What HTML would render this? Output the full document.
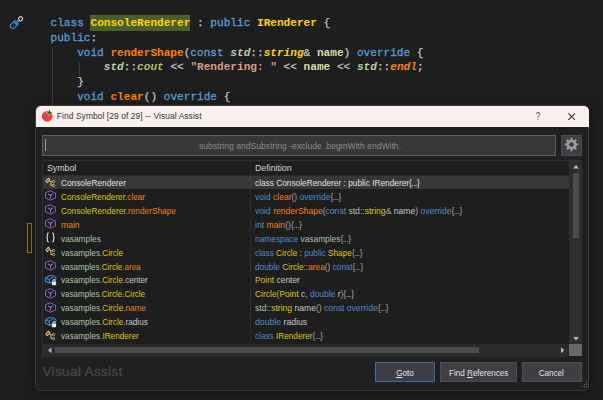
<!DOCTYPE html>
<html><head><meta charset="utf-8"><title>Find Symbol</title>
<style>
html,body{margin:0;padding:0;}
body{width:603px;height:400px;overflow:hidden;background:#1e1e1e;position:relative;font-family:"Liberation Sans",sans-serif;}
.abs{position:absolute;}
/* code */
.code{position:absolute;left:50.5px;top:16.2px;margin:0;font-family:"Liberation Mono",monospace;font-size:11.1px;line-height:14.75px;color:#c8c8c8;white-space:pre;letter-spacing:0;}
.code .k{color:#569cd6;-webkit-text-stroke:0.3px #569cd6;}
.code .t{color:#ffd700;font-weight:bold;}
.code .f{color:#ff8000;font-weight:bold;}
.code .n{color:#b5cea8;font-style:italic;font-weight:bold;}
.code .v{color:#bdb76b;font-style:italic;font-weight:bold;}
.code .s{color:#d69d85;font-weight:bold;}
.code .p{color:#dcdcaa;font-weight:bold;}
.code .o{color:#c4c4c4;-webkit-text-stroke:0.25px #c4c4c4;}
.code .hl{background:#4b5e28;padding:2.2px 0 1.6px 0.8px;margin:0 0 0 -0.8px;}
.guide{position:absolute;width:1px;background:#3a3a3a;}
/* dialog */
#dlg{position:absolute;left:35.5px;top:105.5px;width:553px;height:284.5px;background:#202020;border-radius:5px;box-shadow:0 2px 14px rgba(0,0,0,.4);}
#dlg:after{content:"";position:absolute;left:-0.7px;top:-0.3px;right:-0.7px;bottom:-1.3px;border-radius:5.5px;border:1px solid rgba(255,255,255,0.15);box-sizing:border-box;pointer-events:none;}
#title{position:absolute;left:0;top:0;right:0;height:21.5px;background:#f9f0ee;border-radius:5px 5px 0 0;}
#title .txt{position:absolute;left:21.3px;top:5.3px;font-size:8.4px;line-height:11px;color:#333;letter-spacing:0.1px;white-space:pre;}
#search{position:absolute;left:6.5px;top:29px;width:514px;height:21px;background:#383838;border:1px solid #5c5c5c;box-sizing:border-box;}
#search .ph{position:absolute;left:2px;right:0;top:5px;text-align:center;font-size:8.6px;line-height:11px;color:#8c8c8c;letter-spacing:0px;white-space:pre;}
#search .cur{position:absolute;left:1.9px;top:3px;width:1px;height:12px;background:#9a9a9a;}
#gear{position:absolute;left:525px;top:29px;width:21.5px;height:21px;background:#3f3f45;border:1px solid #4b4b52;box-sizing:border-box;}
#list{position:absolute;left:6.5px;top:54.5px;width:540px;height:196.5px;background:#1e1e1e;border:1px solid #303030;border-right:0;border-bottom:0;box-sizing:border-box;overflow:hidden;}
.hdr{position:absolute;top:-0.2px;height:14px;font-size:9.8px;line-height:13px;color:#d4d4d4;transform:scaleX(.897);transform-origin:0 50%;white-space:pre;}
.row{position:absolute;left:0;width:527px;height:14px;font-size:9.8px;line-height:14px;white-space:pre;color:#c8c8c8;}
.row .sym{position:absolute;left:18px;top:0.55px;transform:scaleX(.89);transform-origin:0 50%;}
.row .def{position:absolute;left:212.5px;top:0.55px;transform:scaleX(.89);transform-origin:0 50%;}
.row .ic{position:absolute;left:1px;top:0;width:14px;height:14px;}
.selbg{position:absolute;left:0;top:14px;width:527px;height:14px;background:linear-gradient(#2b2b2b 0 1px,#373737 1px 14px);}
.ns{color:#a8c4a6;} .ty{color:#dfc21c;} .fn{color:#ee7f1e;} .kw{color:#4f8ccc;} .gr{color:#a8a8a8;} .wh{color:#e0e0e0;} .lg{color:#c8c8c8;}
.btn{position:absolute;top:256.2px;height:20.8px;background:#3e3e44;border:1px solid #4c4c52;box-sizing:border-box;color:#e4e4e4;font-size:9.2px;line-height:20.4px;text-align:center;}
.btn span{display:inline-block;transform:scaleX(.88);white-space:pre;}
u{text-decoration-thickness:0.7px;text-underline-offset:1px;}
</style></head>
<body>
<!-- gutter -->
<svg class="abs" style="left:5px;top:10px" width="25" height="25" viewBox="0 0 25 25"><g fill="none" transform="translate(7.85 15.9) rotate(-42.7)"><path d="M5.3 -0.75 H8.6 M5.3 0.75 H8.6" stroke="#bdbdbd" stroke-width="0.8"/><circle cx="10.55" cy="0" r="2" stroke="#c8c8c8" stroke-width="1.15"/><path d="M5.2 -2.45 H0 A2.45 2.45 0 0 0 0 2.45 H5.2z M3.5 -2.45 V2.45" stroke="#3a8fd8" stroke-width="1.15" stroke-linejoin="round"/><path d="M4.35 -2.45 V2.45" stroke="#3a8fd8" stroke-width="0.9" opacity="0.55"/></g></svg>
<div class="abs" style="left:27px;top:223px;width:5px;height:30px;box-sizing:border-box;border:1px solid #8a7a22;"></div>
<div class="guide" style="left:52px;top:47px;height:60px"></div>
<div class="guide" style="left:79px;top:62px;height:14px"></div>
<pre class="code"><span class="k">class</span> <span class="t hl">ConsoleRenderer</span> <span class="o">:</span> <span class="k">public</span> <span class="t">IRenderer</span> <span class="o">{</span>
<span class="k">public</span><span class="o">:</span>
    <span class="k">void</span> <span class="f">renderShape</span><span class="o">(</span><span class="k">const</span> <span class="n">std</span><span class="o">::</span><span class="t" style="font-style:italic">string</span><span class="o">&amp;</span> <span class="p">name</span><span class="o">)</span> <span class="k">override</span> <span class="o">{</span>
        <span class="n">std</span><span class="o">::</span><span class="v">cout</span> <span class="o">&lt;&lt;</span> <span class="s">"Rendering: "</span> <span class="o">&lt;&lt;</span> <span class="p">name</span> <span class="o">&lt;&lt;</span> <span class="n">std</span><span class="o">::</span><span class="f" style="font-style:italic">endl</span><span class="o">;</span>
    <span class="o">}</span>
    <span class="k">void</span> <span class="f">clear</span><span class="o">()</span> <span class="k">override</span> <span class="o">{</span></pre>

<div id="dlg">
  <div id="title">
    <svg class="abs" style="left:0.5px;top:-0.5px" width="25" height="25" viewBox="0 0 25 25"><circle cx="11.2" cy="11.3" r="5.4" fill="#e0443a"/><path d="M13.4 4.6 L14.3 6.7 L16.4 7.6 L14.3 8.5 L13.4 10.6 L12.5 8.5 L10.4 7.6 L12.5 6.7z" fill="#0f7a1c" stroke="#f9f0ee" stroke-width="0.9" paint-order="stroke" stroke-linejoin="round"/></svg>
    <div class="txt">Find Symbol [29 of 29] -- Visual Assist</div>
    <div class="abs" style="left:499.4px;top:5.5px;font-size:10.8px;line-height:11px;color:#505050;transform:scaleX(.72);">?</div>
    <svg class="abs" style="left:532.3px;top:7px" width="7.4" height="7.4" viewBox="0 0 7.4 7.4"><path d="M0.2 0.2 L7.2 7.2 M7.2 0.2 L0.2 7.2" stroke="#3a3a3a" stroke-width="1.1" fill="none"/></svg>
  </div>
  <div id="search"><div class="cur"></div><div class="ph">substring andSubstring -exclude .beginWith endWith.</div></div>
  <div id="gear"><svg class="abs" style="left:2.2px;top:1.7px" width="15" height="15" viewBox="0 0 16 16"><g fill="#9c9c9c"><circle cx="8" cy="8" r="5.2"/><g transform="rotate(0 8 8)"><path d="M6.7 3.6 L7 0.8 H9 L9.3 3.6z M6.7 12.4 L7 15.2 H9 L9.3 12.4z"/></g><g transform="rotate(45 8 8)"><path d="M6.7 3.6 L7 0.8 H9 L9.3 3.6z M6.7 12.4 L7 15.2 H9 L9.3 12.4z"/></g><g transform="rotate(90 8 8)"><path d="M6.7 3.6 L7 0.8 H9 L9.3 3.6z M6.7 12.4 L7 15.2 H9 L9.3 12.4z"/></g><g transform="rotate(135 8 8)"><path d="M6.7 3.6 L7 0.8 H9 L9.3 3.6z M6.7 12.4 L7 15.2 H9 L9.3 12.4z"/></g></g><circle cx="8" cy="8" r="2.5" fill="#3f3f45"/></svg></div>
  <div id="list">
    <div class="hdr" style="left:4px">Symbol</div>
    <div class="hdr" style="left:212px">Definition</div>
    <div class="selbg"></div>
    <div class="abs" style="left:207px;top:0;width:1px;height:182.5px;background:rgba(255,255,255,0.07)"></div>
    <div class="row" style="top:14.5px"><svg class="ic" viewBox="0 0 14 14"><g fill="none" stroke="#d9ba7e" stroke-width="1"><path d="M4.5 2.2 L5.8 3.8 L3.2 6.7 L1.9 5.1z" stroke-linejoin="round" stroke-width="1.15"/><path d="M5.3 4.8 L6.85 5.6 H8.3 M6.85 5.6 V9.4 H8.3"/><circle cx="9.5" cy="5.6" r="1.1"/><circle cx="9.5" cy="9.5" r="1.1"/></g></svg><span class="sym" style="left:18.20px;transform:scaleX(0.8464)"><span class="wh">ConsoleRenderer</span></span><span class="def" style="left:212.40px;transform:scaleX(0.8470)"><span class="wh">class ConsoleRenderer : public IRenderer<span style="letter-spacing:-0.55px">{...}</span></span></span></div>
<div class="row" style="top:28.42px"><svg class="ic" viewBox="0 0 14 14"><g fill="none" stroke="#9468c6" stroke-width="0.95" stroke-linejoin="round" stroke-linecap="round"><path d="M6.5 1.85 L11.55 4.1 V8.9 L6.5 11.15 L1.45 8.9 V4.1z"/><path d="M4.2 5 L6.5 6.5 L8.8 5 M6.5 6.5 V9.2" stroke-width="1.05"/></g></svg><span class="sym" style="left:18.20px;transform:scaleX(0.8390)"><span class="ty">ConsoleRenderer</span><span class="gr">.</span><span class="fn">clear</span></span><span class="def" style="left:212.40px;transform:scaleX(0.8701)"><span class="kw">void</span> <span class="fn">clear</span><span class="gr">()</span> <span class="kw">override</span><span class="gr"><span style="letter-spacing:-0.55px">{...}</span></span></span></div>
<div class="row" style="top:42.34px"><svg class="ic" viewBox="0 0 14 14"><g fill="none" stroke="#9468c6" stroke-width="0.95" stroke-linejoin="round" stroke-linecap="round"><path d="M6.5 1.85 L11.55 4.1 V8.9 L6.5 11.15 L1.45 8.9 V4.1z"/><path d="M4.2 5 L6.5 6.5 L8.8 5 M6.5 6.5 V9.2" stroke-width="1.05"/></g></svg><span class="sym" style="left:18.20px;transform:scaleX(0.8471)"><span class="ty">ConsoleRenderer</span><span class="gr">.</span><span class="fn">renderShape</span></span><span class="def" style="left:212.40px;transform:scaleX(0.8750)"><span class="kw">void</span> <span class="fn">renderShape</span><span class="gr">(</span><span class="kw">const</span> <span class="ns">std</span><span class="gr">::</span><span class="ty">string</span><span class="gr">&amp;</span> <span class="lg">name</span><span class="gr">)</span> <span class="kw">override</span><span class="gr"><span style="letter-spacing:-0.55px">{...}</span></span></span></div>
<div class="row" style="top:56.26px"><svg class="ic" viewBox="0 0 14 14"><g fill="none" stroke="#9468c6" stroke-width="0.95" stroke-linejoin="round" stroke-linecap="round"><path d="M6.5 1.85 L11.55 4.1 V8.9 L6.5 11.15 L1.45 8.9 V4.1z"/><path d="M4.2 5 L6.5 6.5 L8.8 5 M6.5 6.5 V9.2" stroke-width="1.05"/></g></svg><span class="sym" style="left:18.20px;transform:scaleX(0.8753)"><span class="fn">main</span></span><span class="def" style="left:212.40px;transform:scaleX(0.8781)"><span class="kw">int</span> <span class="fn">main</span><span class="gr">()<span style="letter-spacing:-0.55px">{...}</span></span></span></div>
<div class="row" style="top:70.18px"><svg class="ic" viewBox="0 0 14 14"><g fill="none" stroke="#d2d2d2" stroke-width="1.15"><path d="M4.7 1.9 Q3.4 1.9 3.4 3.2 V5.2 Q3.4 6.4 2.3 6.4 Q3.4 6.4 3.4 7.6 V9.6 Q3.4 10.9 4.7 10.9"/><path d="M8.3 1.9 Q9.6 1.9 9.6 3.2 V5.2 Q9.6 6.4 10.7 6.4 Q9.6 6.4 9.6 7.6 V9.6 Q9.6 10.9 8.3 10.9"/></g></svg><span class="sym" style="left:18.20px;transform:scaleX(0.8499)"><span class="ns">vasamples</span></span><span class="def" style="left:212.40px;transform:scaleX(0.8521)"><span class="kw">namespace</span> <span class="ns">vasamples</span><span class="gr"><span style="letter-spacing:-0.55px">{...}</span></span></span></div>
<div class="row" style="top:84.1px"><svg class="ic" viewBox="0 0 14 14"><g fill="none" stroke="#d9ba7e" stroke-width="1"><path d="M4.5 2.2 L5.8 3.8 L3.2 6.7 L1.9 5.1z" stroke-linejoin="round" stroke-width="1.15"/><path d="M5.3 4.8 L6.85 5.6 H8.3 M6.85 5.6 V9.4 H8.3"/><circle cx="9.5" cy="5.6" r="1.1"/><circle cx="9.5" cy="9.5" r="1.1"/></g></svg><span class="sym" style="left:18.20px;transform:scaleX(0.8323)"><span class="ns">vasamples</span><span class="gr">.</span><span class="ty">Circle</span></span><span class="def" style="left:212.40px;transform:scaleX(0.8427)"><span class="kw">class</span> <span class="ty">Circle</span> <span class="gr">:</span> <span class="kw">public</span> <span class="ty">Shape</span><span class="gr"><span style="letter-spacing:-0.55px">{...}</span></span></span></div>
<div class="row" style="top:98.02px"><svg class="ic" viewBox="0 0 14 14"><g fill="none" stroke="#9468c6" stroke-width="0.95" stroke-linejoin="round" stroke-linecap="round"><path d="M6.5 1.85 L11.55 4.1 V8.9 L6.5 11.15 L1.45 8.9 V4.1z"/><path d="M4.2 5 L6.5 6.5 L8.8 5 M6.5 6.5 V9.2" stroke-width="1.05"/></g></svg><span class="sym" style="left:18.20px;transform:scaleX(0.8210)"><span class="ns">vasamples</span><span class="gr">.</span><span class="ty">Circle</span><span class="gr">.</span><span class="fn">area</span></span><span class="def" style="left:212.40px;transform:scaleX(0.8486)"><span class="kw">double</span> <span class="ty">Circle</span><span class="gr">::</span><span class="fn">area</span><span class="gr">()</span> <span class="kw">const</span><span class="gr"><span style="letter-spacing:-0.55px">{...}</span></span></span></div>
<div class="row" style="top:111.94px"><svg class="ic" viewBox="0 0 14 14"><g fill="none" stroke="#3b90d9" stroke-width="1.05" stroke-linejoin="round" stroke-linecap="round"><path d="M1.2 5.4 L5.1 2.7 L9.6 2.7 L11.9 4.9 V6.4 L5.5 10.3 L1.4 8.3z"/><path d="M2.5 5.6 L5.3 6.4 L8.9 4.1 M5.3 6.4 L5.5 9.8"/></g><rect x="7.3" y="7.9" width="5.3" height="4.6" fill="#202020"/><rect x="7.8" y="8.5" width="4.3" height="3.7" fill="#ececec"/><path d="M8.9 8.6 V7.6 a1.1 1.1 0 0 1 2.2 0 V8.6" fill="none" stroke="#ececec" stroke-width="0.9"/></svg><span class="sym" style="left:18.20px;transform:scaleX(0.8300)"><span class="ns">vasamples</span><span class="gr">.</span><span class="ty">Circle</span><span class="gr">.</span><span class="lg">center</span></span><span class="def" style="left:212.40px;transform:scaleX(0.8583)"><span class="ty">Point</span> <span class="lg">center</span></span></div>
<div class="row" style="top:125.86px"><svg class="ic" viewBox="0 0 14 14"><g fill="none" stroke="#9468c6" stroke-width="0.95" stroke-linejoin="round" stroke-linecap="round"><path d="M6.5 1.85 L11.55 4.1 V8.9 L6.5 11.15 L1.45 8.9 V4.1z"/><path d="M4.2 5 L6.5 6.5 L8.8 5 M6.5 6.5 V9.2" stroke-width="1.05"/></g></svg><span class="sym" style="left:18.20px;transform:scaleX(0.8214)"><span class="ns">vasamples</span><span class="gr">.</span><span class="ty">Circle</span><span class="gr">.</span><span class="ty">Circle</span></span><span class="def" style="left:212.40px;transform:scaleX(0.8617)"><span class="ty">Circle</span><span class="gr">(</span><span class="ty">Point</span> <span class="lg">c</span><span class="gr">,</span> <span class="kw">double</span> <span class="lg">r</span><span class="gr">)<span style="letter-spacing:-0.55px">{...}</span></span></span></div>
<div class="row" style="top:139.78px"><svg class="ic" viewBox="0 0 14 14"><g fill="none" stroke="#9468c6" stroke-width="0.95" stroke-linejoin="round" stroke-linecap="round"><path d="M6.5 1.85 L11.55 4.1 V8.9 L6.5 11.15 L1.45 8.9 V4.1z"/><path d="M4.2 5 L6.5 6.5 L8.8 5 M6.5 6.5 V9.2" stroke-width="1.05"/></g></svg><span class="sym" style="left:18.20px;transform:scaleX(0.8335)"><span class="ns">vasamples</span><span class="gr">.</span><span class="ty">Circle</span><span class="gr">.</span><span class="fn">name</span></span><span class="def" style="left:212.40px;transform:scaleX(0.8732)"><span class="ns">std</span><span class="gr">::</span><span class="ty">string</span> <span class="lg">name</span><span class="gr">()</span> <span class="kw">const</span> <span class="kw">override</span><span class="gr"><span style="letter-spacing:-0.55px">{...}</span></span></span></div>
<div class="row" style="top:153.7px"><svg class="ic" viewBox="0 0 14 14"><g fill="none" stroke="#3b90d9" stroke-width="1.05" stroke-linejoin="round" stroke-linecap="round"><path d="M1.2 5.4 L5.1 2.7 L9.6 2.7 L11.9 4.9 V6.4 L5.5 10.3 L1.4 8.3z"/><path d="M2.5 5.6 L5.3 6.4 L8.9 4.1 M5.3 6.4 L5.5 9.8"/></g><rect x="7.3" y="7.9" width="5.3" height="4.6" fill="#202020"/><rect x="7.8" y="8.5" width="4.3" height="3.7" fill="#ececec"/><path d="M8.9 8.6 V7.6 a1.1 1.1 0 0 1 2.2 0 V8.6" fill="none" stroke="#ececec" stroke-width="0.9"/></svg><span class="sym" style="left:18.20px;transform:scaleX(0.8344)"><span class="ns">vasamples</span><span class="gr">.</span><span class="ty">Circle</span><span class="gr">.</span><span class="lg">radius</span></span><span class="def" style="left:212.40px;transform:scaleX(0.8871)"><span class="kw">double</span> <span class="lg">radius</span></span></div>
<div class="row" style="top:167.62px"><svg class="ic" viewBox="0 0 14 14"><g fill="none" stroke="#d9ba7e" stroke-width="1"><path d="M4.5 2.2 L5.8 3.8 L3.2 6.7 L1.9 5.1z" stroke-linejoin="round" stroke-width="1.15"/><path d="M5.3 4.8 L6.85 5.6 H8.3 M6.85 5.6 V9.4 H8.3"/><circle cx="9.5" cy="5.6" r="1.1"/><circle cx="9.5" cy="9.5" r="1.1"/></g></svg><span class="sym" style="left:18.20px;transform:scaleX(0.8353)"><span class="ns">vasamples</span><span class="gr">.</span><span class="ty">IRenderer</span></span><span class="def" style="left:212.40px;transform:scaleX(0.8386)"><span class="kw">class</span> <span class="ty">IRenderer</span><span class="gr"><span style="letter-spacing:-0.55px">{...}</span></span></span></div>

    <!-- vertical scrollbar -->
    <div class="abs" style="left:526.25px;top:0;width:12.75px;height:183px;background:#2e2e2e"></div>
    <svg class="abs" style="left:530px;top:4.3px" width="6" height="3.4" viewBox="0 0 7 4"><path d="M0 4 L3.5 0 L7 4z" fill="#b8b8b8"/></svg>
    <div class="abs" style="left:529.7px;top:12px;width:6px;height:64.5px;background:#4d4d4d"></div>
    <svg class="abs" style="left:530px;top:176.3px" width="6" height="3.4" viewBox="0 0 7 4"><path d="M0 0 L3.5 4 L7 0z" fill="#b8b8b8"/></svg>
    <!-- horizontal scrollbar -->
    <div class="abs" style="left:0;top:182.5px;width:527px;height:13px;background:#2a2a2a"></div>
    <svg class="abs" style="left:5px;top:185.5px" width="3.5" height="6.4" viewBox="0 0 4 7"><path d="M4 0 L0 3.5 L4 7z" fill="#b4b4b4"/></svg>
    <div class="abs" style="left:11.8px;top:185.9px;width:424.2px;height:6.3px;background:#4d4d4d"></div>
    <svg class="abs" style="left:517.5px;top:185.5px" width="3.5" height="6.4" viewBox="0 0 4 7"><path d="M0 0 L4 3.5 L0 7z" fill="#b4b4b4"/></svg>
    <div class="abs" style="left:526.25px;top:182.5px;width:12.75px;height:12.5px;background:#686868"></div>
  </div>
  <div class="abs" style="left:7px;top:259.5px;font-size:13.6px;line-height:14px;color:#484848;letter-spacing:0.3px;-webkit-text-stroke:0.3px #484848;white-space:pre;">Visual Assist</div>
  <div class="btn" style="left:339px;width:60.3px;border-color:#3a6a9e;"><span><u>G</u>oto</span></div>
  <div class="btn" style="left:404.5px;width:77px;"><span>Find <u>R</u>eferences</span></div>
  <div class="btn" style="left:486px;width:60.5px;"><span>Cancel</span></div>
  <svg class="abs" style="left:545px;top:275.5px" width="7" height="7" viewBox="0 0 7 7"><g fill="#6a6a6a"><rect x="5" y="1" width="1" height="1"/><rect x="3" y="3" width="1" height="1"/><rect x="5" y="3" width="1" height="1"/><rect x="1" y="5" width="1" height="1"/><rect x="3" y="5" width="1" height="1"/><rect x="5" y="5" width="1" height="1"/></g></svg>
</div>
</body></html>
